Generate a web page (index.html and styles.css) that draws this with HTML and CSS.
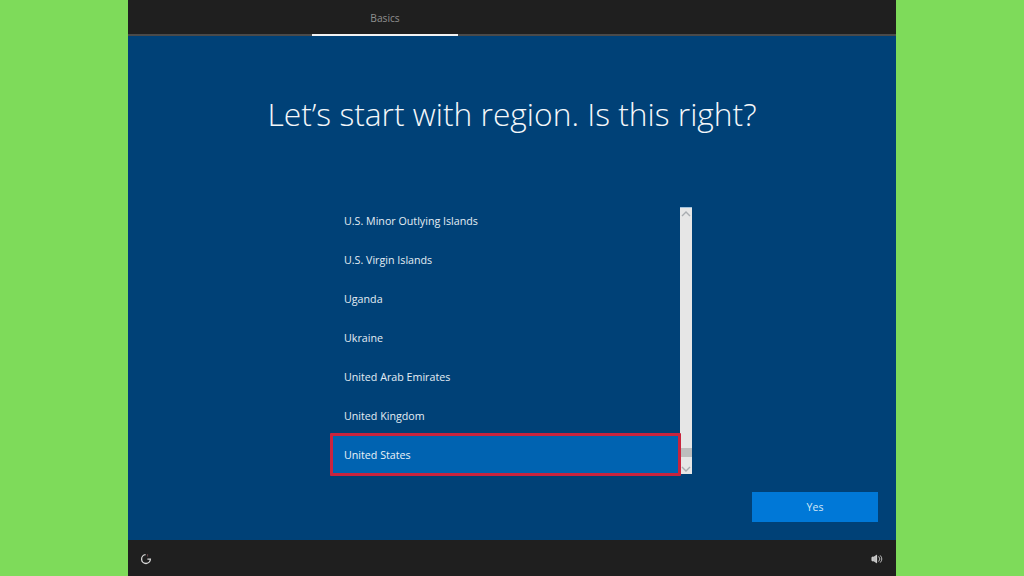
FILE: index.html
```html
<!DOCTYPE html>
<html lang="en">
<head>
<meta charset="utf-8">
<title>Region</title>
<link rel="stylesheet" href="styles.css">
</head>
<body>
<div class="panel">
  <header class="topbar"><div class="tab">Basics</div></header>
  <main class="main">
    <h1 class="title">Let’s start with region. Is this right?</h1>
    <div class="picker">
      <ul class="list">
        <li class="row">U.S. Minor Outlying Islands</li>
        <li class="row">U.S. Virgin Islands</li>
        <li class="row">Uganda</li>
        <li class="row">Ukraine</li>
        <li class="row">United Arab Emirates</li>
        <li class="row">United Kingdom</li>
        <li class="row selected">United States</li>
      </ul>
      <div class="scrollbar">
        <svg class="arrow" viewBox="0 0 10 6" width="10" height="6"><path d="M1 5 L5 1 L9 5" fill="none" stroke="#a9adb1" stroke-width="1.4"/></svg>
        <div class="thumb"></div>
        <svg class="arrow" viewBox="0 0 10 6" width="10" height="6"><path d="M1 1 L5 5 L9 1" fill="none" stroke="#a9adb1" stroke-width="1.4"/></svg>
      </div>
    </div>
    <div class="actions"><button class="yes">Yes</button></div>
  </main>
  <footer class="footer">
    <svg class="icon" viewBox="0 0 12 12" width="12" height="12"><path d="M5.6 1.7 A4.4 4.4 0 1 0 10.4 6.1 H7.4" fill="none" stroke="#d8d8d8" stroke-width="1.3"/><path d="M7.6 1.2 V3.6" fill="none" stroke="#7a4a52" stroke-width="0.8"/></svg>
    <svg class="icon" viewBox="0 0 12 12" width="12" height="12"><path d="M1 4.2 H3 L5.6 2.2 V9.8 L3 7.8 H1 Z" fill="#bdbdbd" stroke="#d8d8d8" stroke-width="1"/><path d="M7.6 3.4 A3.6 3.6 0 0 1 7.6 8.6 M9.2 2.4 A5.4 5.4 0 0 1 9.2 9.6" fill="none" stroke="#bdbdbd" stroke-width="1"/></svg>
  </footer>
</div>
</body>
</html>
```
FILE: styles.css
```css
* { box-sizing: border-box; }
html, body { margin: 0; height: 100%; }
body {
  background: #7edb5a;
  display: flex;
  justify-content: center;
  font-family: "Open Sans", "Noto Sans", sans-serif;
  overflow: hidden;
}
.panel {
  width: 768px;
  height: 576px;
  display: flex;
  flex-direction: column;
  background: #004177;
}
.topbar {
  height: 36px;
  background: #1f1f1f;
  border-bottom: 2px solid #4a4a4a;
  padding-left: 184px;
}
.tab {
  width: 146px;
  height: 36px;
  border-bottom: 2px solid #f2f2f2;
  color: #8f8f8f;
  font-size: 10.2px;
  line-height: 36px;
  text-align: center;
}
.main {
  flex: 1;
  display: flex;
  flex-direction: column;
  padding-top: 54px;
}
.title {
  margin: 0;
  color: #f4f7fa;
  font-size: 31.75px;
  font-weight: 300;
  line-height: 48px;
  text-align: center;
}
.picker {
  display: flex;
  width: 361px;
  height: 267px;
  margin: 69px 0 0 203px;
}
.list {
  flex: 1;
  list-style: none;
  margin: 0;
  padding: 0;
}
.row {
  height: 39px;
  padding-left: 13px;
  color: #e4edf4;
  font-size: 10.7px;
  line-height: 28px;
}
.selected {
  position: relative;
  z-index: 1;
  height: 43px;
  margin: -8px -1px 0 -1px;
  padding-left: 11px;
  background: #0063b1;
  border: 3px solid #c8243e;
  border-radius: 1px;
  line-height: 38px;
  color: #eaf2f8;
}
.scrollbar {
  width: 12px;
  height: 267px;
  background: #e6e6e6;
  border-top: 1px solid #9fc0dc;
  display: flex;
  flex-direction: column;
  align-items: center;
  padding-top: 3px;
  padding-bottom: 2px;
}
.arrow { flex: none; }
.thumb {
  width: 12px;
  height: 9px;
  margin-top: auto;
  margin-bottom: 9px;
  background: #bdbdbd;
}
.actions {
  display: flex;
  justify-content: flex-end;
  padding: 18px 18px 0 0;
}
.yes {
  width: 126px;
  height: 30px;
  border: 0;
  padding: 0;
  background: #0078d7;
  color: #d5e8f6;
  font-family: inherit;
  font-size: 10.5px;
}
.footer {
  height: 36px;
  margin-top: auto;
  background: #1f1f1f;
  display: flex;
  justify-content: space-between;
  align-items: center;
  padding: 2px 13px 0 12px;
}
.icon { display: block; }
```
